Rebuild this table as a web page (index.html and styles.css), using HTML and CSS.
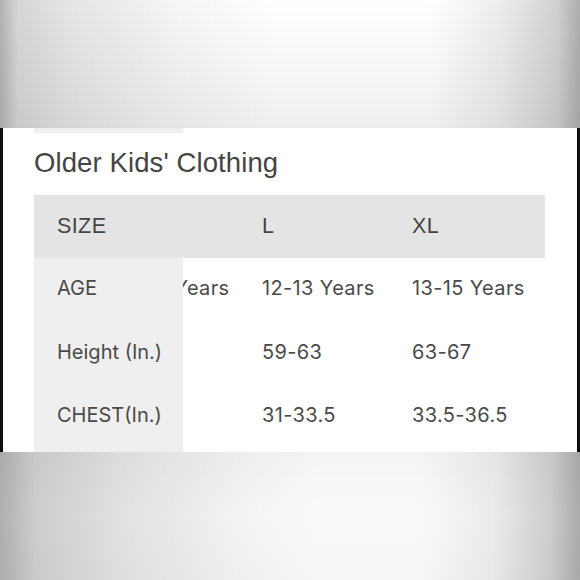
FILE: index.html
```html
<!DOCTYPE html>
<html lang="en">
<head>
<meta charset="utf-8">
<title>Older Kids' Clothing</title>
<link rel="stylesheet" href="styles.css">
</head>
<body>
  <div class="band band-top"></div>
  <section class="panel">
    <div class="sliver"></div>
    <h2 class="title">Older Kids' Clothing</h2>
    <div class="chart">
      <div class="row head">
        <div class="cell first">SIZE</div>
        <div class="cell clip"></div>
        <div class="cell">L</div>
        <div class="cell">XL</div>
      </div>
      <div class="row">
        <div class="cell first label">AGE</div>
        <div class="cell clip"><span class="inner">11-12 Years</span></div>
        <div class="cell val">12-13 Years</div>
        <div class="cell val">13-15 Years</div>
      </div>
      <div class="row">
        <div class="cell first label">Height (In.)</div>
        <div class="cell clip"></div>
        <div class="cell val">59-63</div>
        <div class="cell val">63-67</div>
      </div>
      <div class="row">
        <div class="cell first label">CHEST(In.)</div>
        <div class="cell clip"></div>
        <div class="cell val">31-33.5</div>
        <div class="cell val">33.5-36.5</div>
      </div>
      <div class="row">
        <div class="cell first label"></div>
        <div class="cell clip"></div>
        <div class="cell val"></div>
        <div class="cell val"></div>
      </div>
    </div>
  </section>
  <div class="band band-bottom"></div>
</body>
</html>
```

FILE: styles.css
```css
html, body {
  margin: 0;
  padding: 0;
}
body {
  width: 580px;
  height: 580px;
  overflow: hidden;
  display: flex;
  flex-direction: column;
  background: #fff;
  font-family: "Liberation Sans", Arial, sans-serif;
  color: #444;
}
.band {
  height: 128px;
  flex: none;
}
.band-top {
  background:
    linear-gradient(to right, rgba(0,0,0,0.30) 0%, rgba(0,0,0,0.16) 3%, rgba(0,0,0,0.10) 12%, rgba(0,0,0,0.04) 30%, rgba(0,0,0,0) 48%, rgba(0,0,0,0) 74%, rgba(0,0,0,0.07) 86%, rgba(0,0,0,0.18) 96%, rgba(0,0,0,0.32) 100%),
    linear-gradient(to bottom, #ffffff 0%, #f6f6f6 60%, #efefef 100%);
}
.band-bottom {
  background:
    linear-gradient(to right, rgba(0,0,0,0.30) 0%, rgba(0,0,0,0.18) 6%, rgba(0,0,0,0.10) 20%, rgba(0,0,0,0.03) 40%, rgba(0,0,0,0) 55%, rgba(0,0,0,0) 72%, rgba(0,0,0,0.06) 85%, rgba(0,0,0,0.18) 95%, rgba(0,0,0,0.32) 100%),
    linear-gradient(to bottom, #f4f4f4 0%, #fafafa 50%, #f6f6f6 100%);
}
.panel {
  flex: none;
  height: 324px;
  box-sizing: border-box;
  border-left: 3px solid #0e0e0e;
  border-right: 3px solid #0e0e0e;
  padding-left: 31px;
  overflow: hidden;
  background: #fff;
}
.sliver {
  width: 149px;
  height: 5px;
  background: #efefef;
}
.title {
  margin: 0;
  height: 62px;
  padding-bottom: 2px;
  box-sizing: border-box;
  display: flex;
  align-items: center;
  font-family: "Liberation Sans", Arial, sans-serif;
  font-weight: normal;
  font-size: 27.5px;
  letter-spacing: 0.1px;
  color: #444;
}
.chart {
  width: 511px;
}
.row {
  display: grid;
  grid-template-columns: 149px 56px 150px 1fr;
  height: 63.5px;
}
.head {
  height: 63px;
}
.cell {
  display: flex;
  align-items: center;
  padding-left: 23px;
  padding-bottom: 3px;
  box-sizing: border-box;
  white-space: nowrap;
  font-family: "Inter", "Noto Sans", sans-serif;
  font-size: 20px;
  letter-spacing: 0.35px;
  color: #4a4a4a;
}
.label {
  letter-spacing: 0;
}
.head {
  background: #e4e4e4;
}
.head .cell {
  padding-bottom: 0;
  font-family: "Liberation Sans", Arial, sans-serif;
  font-size: 21.5px;
  letter-spacing: 0.4px;
  color: #444;
}
.first {
  background: #efefef;
}
.head .first {
  background: transparent;
}
.clip {
  padding-left: 0;
  overflow: hidden;
  justify-content: flex-end;
}
.inner {
  flex: none;
  width: 150px;
  padding-left: 32px;
  box-sizing: border-box;
}
```
